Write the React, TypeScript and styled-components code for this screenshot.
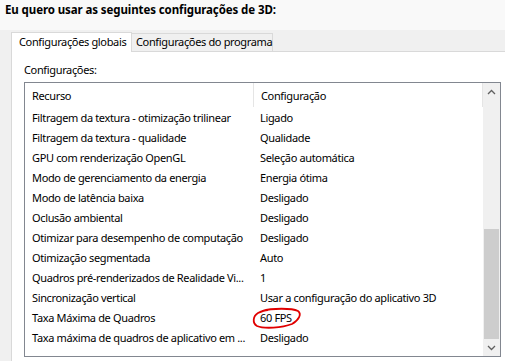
import React from "react";
import styled, { createGlobalStyle } from "styled-components";

const Global = createGlobalStyle`
  html, body { margin: 0; padding: 0; }
  body {
    width: 505px; height: 361px; overflow: hidden;
    background: #f0f0f0;
    font-family: "Noto Sans", "Segoe UI", sans-serif;
    font-size: 11px; letter-spacing: -0.35px; color: #000;
  }
`;

const Page = styled.div`
  width: 505px; height: 361px;
  display: flex; flex-direction: column;
  background: #f0f0f0;
`;

const Heading = styled.div`
  height: 30px; box-sizing: border-box;
  padding: 2px 0 0 5px;
  background: #f9f9f9;
  font-weight: bold; font-size: 11.5px; letter-spacing: -0.1px;
  line-height: 16px;
`;

const TabStrip = styled.div`
  display: flex; align-items: flex-end;
  padding: 2px 0 0 11px; height: 21px;
  box-sizing: border-box;
`;

const Tab = styled.div<{ $active?: boolean }>`
  box-sizing: border-box;
  width: ${(p) => (p.$active ? "121px" : "141px")};
  height: ${(p) => (p.$active ? "20px" : "18px")};
  padding-left: ${(p) => (p.$active ? "7px" : "4px")};
  border: 1px solid #d9d9d9;
  border-left: ${(p) => (p.$active ? "1px solid #d9d9d9" : "none")};
  border-bottom: none;
  background: ${(p) => (p.$active ? "#fff" : "#f0f0f0")};
  line-height: ${(p) => (p.$active ? "17px" : "15px")};
  margin-bottom: ${(p) => (p.$active ? "-1px" : "0")};
  position: relative;
  z-index: ${(p) => (p.$active ? 1 : 0)};
  white-space: nowrap;
`;

const Panel = styled.div`
  flex: 1;
  margin-left: 11px;
  background: #fff;
  border-top: 1px solid #d9d9d9;
  border-left: 1px solid #d9d9d9;
  padding: 10px 4px 0 12px;
  display: flex; flex-direction: column;
`;

const Label = styled.div`
  line-height: 16px; height: 20px;
`;

const ListBox = styled.div`
  position: relative;
  height: 275px; box-sizing: border-box;
  border: 1px solid #828790;
  display: flex;
  background: #fff;
`;

const ListMain = styled.div`
  flex: 1; display: flex; flex-direction: column;
`;

const Row = styled.div<{ $header?: boolean }>`
  display: grid;
  grid-template-columns: 228px 1fr;
  height: ${(p) => (p.$header ? "24px" : "20px")};
  align-items: center;
  white-space: nowrap;
`;

const Cell = styled.div<{ $divider?: boolean }>`
  padding-left: 7px;
  overflow: hidden;
  height: 100%;
  display: flex; align-items: center;
  box-sizing: border-box;
  border-left: ${(p) => (p.$divider ? "1px solid #e5e5e5" : "none")};
  position: relative;
`;

const HeaderEnd = styled.span`
  position: absolute; right: 0; top: 0; bottom: 0;
  width: 1px; background: #e5e5e5;
`;

const ScrollBar = styled.div`
  width: 17px; background: #f0f0f0;
  display: flex; flex-direction: column;
`;

const ScrollBtn = styled.div`
  height: 17px; display: flex; align-items: center; justify-content: center;
`;

const Track = styled.div`
  flex: 1; display: flex; flex-direction: column; justify-content: flex-end;
  padding: 0 1px;
`;

const Thumb = styled.div`
  height: 110px; background: #cdcdcd;
`;

const Circle = styled.svg`
  position: absolute; left: 227px; top: 225px;
  overflow: visible;
`;

const rows: [string, string][] = [
  ["Filtragem da textura - otimização trilinear", "Ligado"],
  ["Filtragem da textura - qualidade", "Qualidade"],
  ["GPU com renderização OpenGL", "Seleção automática"],
  ["Modo de gerenciamento da energia", "Energia ótima"],
  ["Modo de latência baixa", "Desligado"],
  ["Oclusão ambiental", "Desligado"],
  ["Otimizar para desempenho de computação", "Desligado"],
  ["Otimização segmentada", "Auto"],
  ["Quadros pré-renderizados de Realidade Vi...", "1"],
  ["Sincronização vertical", "Usar a configuração do aplicativo 3D"],
  ["Taxa Máxima de Quadros", "60 FPS"],
  ["Taxa máxima de quadros de aplicativo em ...", "Desligado"],
];

const Chevron = ({ up }: { up?: boolean }) => (
  <svg width="9" height="6" viewBox="0 0 9 6">
    <path
      d={up ? "M1 5 L4.5 1.5 L8 5" : "M1 1 L4.5 4.5 L8 1"}
      fill="none"
      stroke="#606060"
      strokeWidth="1.3"
    />
  </svg>
);

export default function App() {
  return (
    <>
      <Global />
      <Page>
        <Heading>Eu quero usar as seguintes configurações de 3D:</Heading>
        <TabStrip>
          <Tab $active>Configurações globais</Tab>
          <Tab>Configurações do programa</Tab>
        </TabStrip>
        <Panel>
          <Label>Configurações:</Label>
          <ListBox>
            <ListMain>
              <Row $header>
                <Cell>Recurso</Cell>
                <Cell $divider>
                  Configuração
                  <HeaderEnd />
                </Cell>
              </Row>
              {rows.map(([a, b]) => (
                <Row key={a}>
                  <Cell>{a}</Cell>
                  <Cell>{b}</Cell>
                </Row>
              ))}
            </ListMain>
            <ScrollBar>
              <ScrollBtn>
                <Chevron up />
              </ScrollBtn>
              <Track>
                <Thumb />
              </Track>
              <ScrollBtn>
                <Chevron />
              </ScrollBtn>
            </ScrollBar>
            <Circle width="50" height="22" viewBox="0 0 50 22">
              <path
                d="M10 3 C20 0, 40 0, 46 3 C50 6, 47 12, 40 16 C30 20, 12 21, 5 18 C0 15, 1 8, 6 5 C8 4, 12 2, 16 2"
                fill="none"
                stroke="#e00000"
                strokeWidth="1.8"
              />
            </Circle>
          </ListBox>
        </Panel>
      </Page>
    </>
  );
}
